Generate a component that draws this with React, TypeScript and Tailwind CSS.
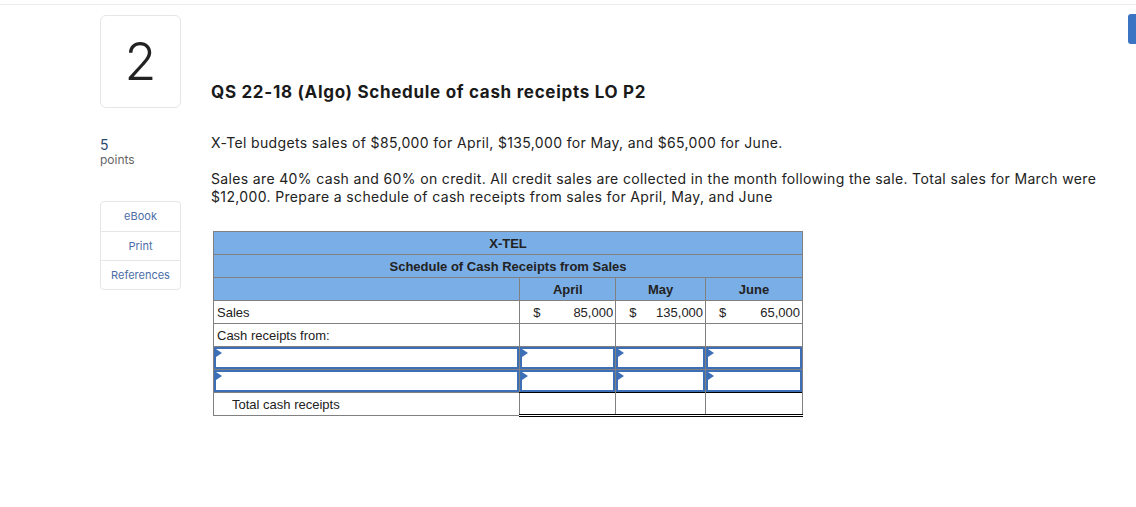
export default function App() {
  const font = { fontFamily: "Inter, Lato, sans-serif" };
  return (
    <div className="relative w-[1136px] h-[507px] bg-white overflow-hidden" style={font}>
      {/* top rule */}
      <div className="h-[5px] border-b border-[#ebebeb]" />
      {/* scroll tab at right edge */}
      <div className="absolute right-0 top-[14px] w-[8px] h-[30px] rounded-l-[3px] bg-[#3c74c4]" />

      <div className="flex pl-[100px] pt-[10px]">
        {/* left column */}
        <div className="w-[81px] flex flex-col">
          <div className="h-[93px] border border-[#e6e6e6] rounded-[6px] flex items-center justify-center">
            <span className="text-[52px] leading-none font-light text-[#222]">2</span>
          </div>
          <div className="mt-[29px] text-[14px] leading-[16px] text-[#2c4a70]">5</div>
          <div className="text-[12px] leading-[14px] text-[#666]">points</div>
          <div className="mt-[34px] border border-[#e6e6e6] rounded-[4px] flex flex-col text-[11px] text-[#4b6ea8] text-center">
            <div className="h-[30px] flex items-center justify-center border-b border-[#e6e6e6]">eBook</div>
            <div className="h-[29px] flex items-center justify-center border-b border-[#e6e6e6]">Print</div>
            <div className="h-[28px] flex items-center justify-center">References</div>
          </div>
        </div>

        {/* right column */}
        <div className="ml-[30px] flex flex-col text-[#222]">
          <h1 className="mt-[67px] text-[17px] leading-[20px] font-bold tracking-[0.7px] text-[#1a1a1a]">
            QS 22-18 (Algo) Schedule of cash receipts LO P2
          </h1>
          <p className="mt-[32px] text-[14px] leading-[18px] tracking-[0.35px]">
            X-Tel budgets sales of $85,000 for April, $135,000 for May, and $65,000 for June.
          </p>
          <p className="mt-[18px] text-[14px] leading-[18px] tracking-[0.35px] w-[905px]">
            Sales are 40% cash and 60% on credit. All credit sales are collected in the month following the sale. Total sales for March were
            $12,000. Prepare a schedule of cash receipts from sales for April, May, and June
          </p>
          <div className="mt-[25px] ml-[2px]">
            <Schedule />
          </div>
        </div>
      </div>
    </div>
  );
}

function InputCell({ w }: { w: string }) {
  return (
    <td className={`${w} h-[23px] p-0 border border-[#808080]`}>
      <div className="relative h-[22px] border-2 border-[#3d6fb7]">
        <div className="absolute left-0 top-0 w-0 h-0 border-t-[4px] border-b-[4px] border-l-[6px] border-t-transparent border-b-transparent border-l-[#3d6fb7]" />
      </div>
    </td>
  );
}

function Schedule() {
  const cell = "border border-[#808080] h-[23px] p-0";
  const head = "bg-[#7aaee6] font-bold text-[#222]";
  return (
    <table
      className="border-collapse w-[590px] text-[13px] leading-[15px] text-[#222]"
      style={{ fontFamily: "'Liberation Sans', Arial, sans-serif" }}
    >
      <tbody>
        <tr>
          <td colSpan={4} className={`${cell} ${head} text-center`}>X-TEL</td>
        </tr>
        <tr>
          <td colSpan={4} className={`${cell} ${head} text-center`}>Schedule of Cash Receipts from Sales</td>
        </tr>
        <tr>
          <td className={`${cell} ${head} w-[307px]`} />
          <td className={`${cell} ${head} w-[96px] text-center`}>April</td>
          <td className={`${cell} ${head} w-[90px] text-center`}>May</td>
          <td className={`${cell} ${head} w-[97px] text-center`}>June</td>
        </tr>
        <tr>
          <td className={`${cell} pl-[3px]`}>Sales</td>
          <td className={cell}>
            <div className="flex justify-between pl-[13px] pr-[2px]"><span>$</span><span>85,000</span></div>
          </td>
          <td className={cell}>
            <div className="flex justify-between pl-[13px] pr-[2px]"><span>$</span><span>135,000</span></div>
          </td>
          <td className={cell}>
            <div className="flex justify-between pl-[13px] pr-[2px]"><span>$</span><span>65,000</span></div>
          </td>
        </tr>
        <tr>
          <td className={`${cell} pl-[3px]`}>Cash receipts from:</td>
          <td className={cell} />
          <td className={cell} />
          <td className={cell} />
        </tr>
        {[0, 1].map((i) => (
          <tr key={i}>
            <InputCell w="w-[307px]" />
            <InputCell w="w-[96px]" />
            <InputCell w="w-[90px]" />
            <InputCell w="w-[97px]" />
          </tr>
        ))}
        <tr>
          <td className={`${cell} pl-[18px]`}>Total cash receipts</td>
          <td className="h-[23px] p-0 border-x border-[#808080] border-t border-t-black border-b-[3px] border-b-black border-double" />
          <td className="h-[23px] p-0 border-x border-[#808080] border-t border-t-black border-b-[3px] border-b-black border-double" />
          <td className="h-[23px] p-0 border-x border-[#808080] border-t border-t-black border-b-[3px] border-b-black border-double" />
        </tr>
      </tbody>
    </table>
  );
}
